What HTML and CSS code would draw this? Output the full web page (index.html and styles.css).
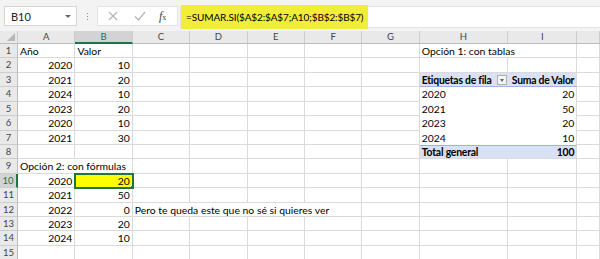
FILE: index.html
```html
<!DOCTYPE html>
<html lang="es">
<head>
  <meta charset="UTF-8" />
  <title>SUMAR.SI</title>
  <link rel="stylesheet" href="styles.css">
</head>
<body>
<div class="toolbar">
  <div class="namebox"><span>B10</span><span class="caret"></span></div>
  <div class="grip"><i></i><i></i><i></i></div>
  <div class="fxbox">
    <svg width="10" height="10" viewBox="0 0 10 10"><path d="M1 1L9 9M9 1L1 9" stroke="#b4b4b4" stroke-width="1.2" fill="none"/></svg>
    <svg width="12" height="10" viewBox="0 0 12 10"><path d="M1 5.5L4.5 9L11 1" stroke="#b4b4b4" stroke-width="1.2" fill="none"/></svg>
    <span class="fx"><i>f</i><small>x</small></span>
  </div>
  <div class="formula"><span class="mark">=SUMAR.SI($A$2:$A$7;A10;$B$2:$B$7)</span></div>
</div>

<div class="sheet">
  <!-- cabecera columnas -->
  <div class="hd corner"><span class="tri"></span></div>
  <div class="hd">A</div><div class="hd sel-col">B</div><div class="hd">C</div><div class="hd">D</div>
  <div class="hd">E</div><div class="hd">F</div><div class="hd">G</div><div class="hd">H</div><div class="hd">I</div><div class="hd"></div>

  <!-- 1 -->
  <div class="rh">1</div><div class="c">Año</div><div class="c">Valor</div>
  <div class="c"></div><div class="c"></div><div class="c"></div><div class="c"></div><div class="c"></div>
  <div class="c span2">Opción 1: con tablas</div><div class="c"></div>
  <!-- 2 -->
  <div class="rh">2</div><div class="c n">2020</div><div class="c n">10</div>
  <div class="c"></div><div class="c"></div><div class="c"></div><div class="c"></div><div class="c"></div>
  <div class="c"></div><div class="c"></div><div class="c"></div>
  <!-- 3 -->
  <div class="rh">3</div><div class="c n">2021</div><div class="c n">20</div>
  <div class="c"></div><div class="c"></div><div class="c"></div><div class="c"></div><div class="c"></div>
  <div class="c pv-head">Etiquetas de fila<span class="filter"></span></div><div class="c pv-head n pv-i">Suma de Valor</div><div class="c"></div>
  <!-- 4 -->
  <div class="rh">4</div><div class="c n">2024</div><div class="c n">10</div>
  <div class="c"></div><div class="c"></div><div class="c"></div><div class="c"></div><div class="c"></div>
  <div class="c pv">2020</div><div class="c pv n pv-i">20</div><div class="c"></div>
  <!-- 5 -->
  <div class="rh">5</div><div class="c n">2023</div><div class="c n">20</div>
  <div class="c"></div><div class="c"></div><div class="c"></div><div class="c"></div><div class="c"></div>
  <div class="c pv">2021</div><div class="c pv n pv-i">50</div><div class="c"></div>
  <!-- 6 -->
  <div class="rh">6</div><div class="c n">2020</div><div class="c n">10</div>
  <div class="c"></div><div class="c"></div><div class="c"></div><div class="c"></div><div class="c"></div>
  <div class="c pv">2023</div><div class="c pv n pv-i">20</div><div class="c"></div>
  <!-- 7 -->
  <div class="rh">7</div><div class="c n">2021</div><div class="c n">30</div>
  <div class="c"></div><div class="c"></div><div class="c"></div><div class="c"></div><div class="c"></div>
  <div class="c pv">2024</div><div class="c pv n pv-i">10</div><div class="c"></div>
  <!-- 8 -->
  <div class="rh">8</div><div class="c"></div><div class="c"></div>
  <div class="c"></div><div class="c"></div><div class="c"></div><div class="c"></div><div class="c"></div>
  <div class="c pv-total">Total general</div><div class="c pv-total n pv-i">100</div><div class="c"></div>
  <!-- 9 -->
  <div class="rh">9</div><div class="c span2">Opción 2: con fórmulas</div>
  <div class="c"></div><div class="c"></div><div class="c"></div><div class="c"></div><div class="c"></div>
  <div class="c"></div><div class="c"></div><div class="c"></div>
  <!-- 10 -->
  <div class="rh sel-row">10</div><div class="c n">2020</div><div class="c n active">20<span class="handle"></span></div>
  <div class="c"></div><div class="c"></div><div class="c"></div><div class="c"></div><div class="c"></div>
  <div class="c"></div><div class="c"></div><div class="c"></div>
  <!-- 11 -->
  <div class="rh">11</div><div class="c n">2021</div><div class="c n">50</div>
  <div class="c"></div><div class="c"></div><div class="c"></div><div class="c"></div><div class="c"></div>
  <div class="c"></div><div class="c"></div><div class="c"></div>
  <!-- 12 -->
  <div class="rh">12</div><div class="c n">2022</div><div class="c n">0</div>
  <div class="c span4">Pero te queda este que no sé si quieres ver</div>
  <div class="c"></div><div class="c"></div><div class="c"></div><div class="c"></div>
  <!-- 13 -->
  <div class="rh">13</div><div class="c n">2023</div><div class="c n">20</div>
  <div class="c"></div><div class="c"></div><div class="c"></div><div class="c"></div><div class="c"></div>
  <div class="c"></div><div class="c"></div><div class="c"></div>
  <!-- 14 -->
  <div class="rh">14</div><div class="c n">2024</div><div class="c n">10</div>
  <div class="c"></div><div class="c"></div><div class="c"></div><div class="c"></div><div class="c"></div>
  <div class="c"></div><div class="c"></div><div class="c"></div>
  <!-- 15 -->
  <div class="rh">15</div><div class="c"></div><div class="c"></div>
  <div class="c"></div><div class="c"></div><div class="c"></div><div class="c"></div><div class="c"></div>
  <div class="c"></div><div class="c"></div><div class="c"></div>
</div>
</body>
</html>
```

FILE: styles.css
```css
* {
  box-sizing: border-box;
}
html, body {
  margin: 0;
  overflow: hidden;
}
body {
  width: 600px;
  height: 259px;
  background: #fff;
  font-family: Lato, "Liberation Sans", sans-serif;
  color: #000;
}

/* barra de formulas */
.toolbar {
  display: flex;
  align-items: flex-start;
  height: 31px;
  padding: 6px 0 0 4px;
  background: #f3f3f3;
}
.namebox {
  width: 73px;
  height: 20px;
  display: flex;
  align-items: center;
  justify-content: space-between;
  padding: 0 5px 0 6px;
  background: #fff;
  border: 1px solid #d6d6d6;
  font-size: 11px;
  color: #222;
}
.caret {
  width: 0;
  height: 0;
  border-left: 3px solid transparent;
  border-right: 3px solid transparent;
  border-top: 3px solid #666;
}
.grip {
  width: 20px;
  height: 20px;
  display: flex;
  flex-direction: column;
  align-items: center;
  justify-content: center;
  gap: 2px;
}
.grip i {
  width: 1px;
  height: 1px;
  background: #888;
}
.fxbox {
  width: 81px;
  height: 20px;
  display: flex;
  align-items: center;
  padding-left: 10px;
  background: #fff;
  border: 1px solid #e2e2e2;
}
.fxbox svg:first-child {
  margin-right: 16px;
}
.fxbox svg:nth-child(2) {
  margin-right: 13px;
}
.fx {
  font-family: "Liberation Serif", serif;
  font-size: 12px;
  color: #444;
}
.fx small {
  font-size: 8px;
}
.formula {
  flex: 1;
  min-width: 0;
  height: 22px;
  margin-left: 2px;
  display: flex;
  align-items: center;
  background: #fff;
  border: 1px solid #e2e2e2;
  border-right: none;
}
.mark {
  display: flex;
  align-items: center;
  height: 24px;
  padding: 0 5px 0 5px;
  background: #f1ee3a;
  font-size: 10px;
  letter-spacing: -0.12px;
}

/* hoja */
.sheet {
  display: grid;
  width: 600px;
  grid-template-columns: 18px repeat(7, 57.4px) 88.5px 69px 1fr;
  grid-template-rows: 13px repeat(15, 14.43px);
  font-size: 10.4px;
}
.hd {
  background: #e9e9e9;
  border-right: 1px solid #cdcdcd;
  border-bottom: 1px solid #bdbdbd;
  text-align: center;
  font-size: 9.5px;
  line-height: 12px;
  color: #444;
}
.corner {
  position: relative;
}
.tri {
  position: absolute;
  right: 2px;
  bottom: 2px;
  width: 0;
  height: 0;
  border-left: 8px solid transparent;
  border-bottom: 8px solid #b8b8b8;
}
.sel-col {
  background: #d3d3d3;
  color: #217346;
  border-bottom: 2px solid #217346;
}
.rh {
  background: #e9e9e9;
  border-right: 1px solid #bdbdbd;
  border-bottom: 1px solid #cdcdcd;
  text-align: center;
  font-size: 9.5px;
  line-height: 14px;
  color: #444;
}
.sel-row {
  background: #d3d3d3;
  color: #217346;
  border-right: 2px solid #217346;
}
.c {
  border-right: 1px solid #dadada;
  border-bottom: 1px solid #dadada;
  padding: 0 2px;
  line-height: 14px;
  white-space: nowrap;
  overflow: hidden;
}
.n {
  text-align: right;
}
.span2 {
  grid-column: span 2;
}
.span4 {
  grid-column: span 4;
}

/* tabla dinamica */
.pv-head {
  display: flex;
  align-items: center;
  justify-content: space-between;
  background: #d9e1f2;
  font-weight: bold;
  letter-spacing: -0.25px;
  border-right: none;
  border-bottom: 1px solid #9bb4e0;
}
.pv-head.n {
  justify-content: flex-end;
}
.pv-i {
  border-right: 1px solid #dadada;
}
.filter {
  flex: none;
  width: 10px;
  height: 10px;
  margin-right: -1px;
  border: 1px solid #b0b0b0;
  background: #f4f4f4;
  position: relative;
}
.filter::after {
  content: "";
  position: absolute;
  left: 2px;
  top: 3px;
  border-left: 2.5px solid transparent;
  border-right: 2.5px solid transparent;
  border-top: 3px solid #666;
}
.pv {
  border-right: none;
  border-bottom: none;
}
.pv.pv-i {
  border-right: 1px solid #dadada;
}
.pv-total {
  background: #d9e1f2;
  font-weight: bold;
  letter-spacing: -0.2px;
  border-top: 1px solid #9bb4e0;
  border-right: none;
  line-height: 12px;
}
.pv-total.pv-i {
  border-right: 1px solid #dadada;
}

/* celda activa */
.active {
  position: relative;
  background: #ffff00;
  outline: 2px solid #217346;
  outline-offset: -1px;
  z-index: 1;
}
.handle {
  position: absolute;
  right: -3px;
  bottom: -3px;
  width: 5px;
  height: 5px;
  background: #217346;
  border: 1px solid #fff;
}
```
